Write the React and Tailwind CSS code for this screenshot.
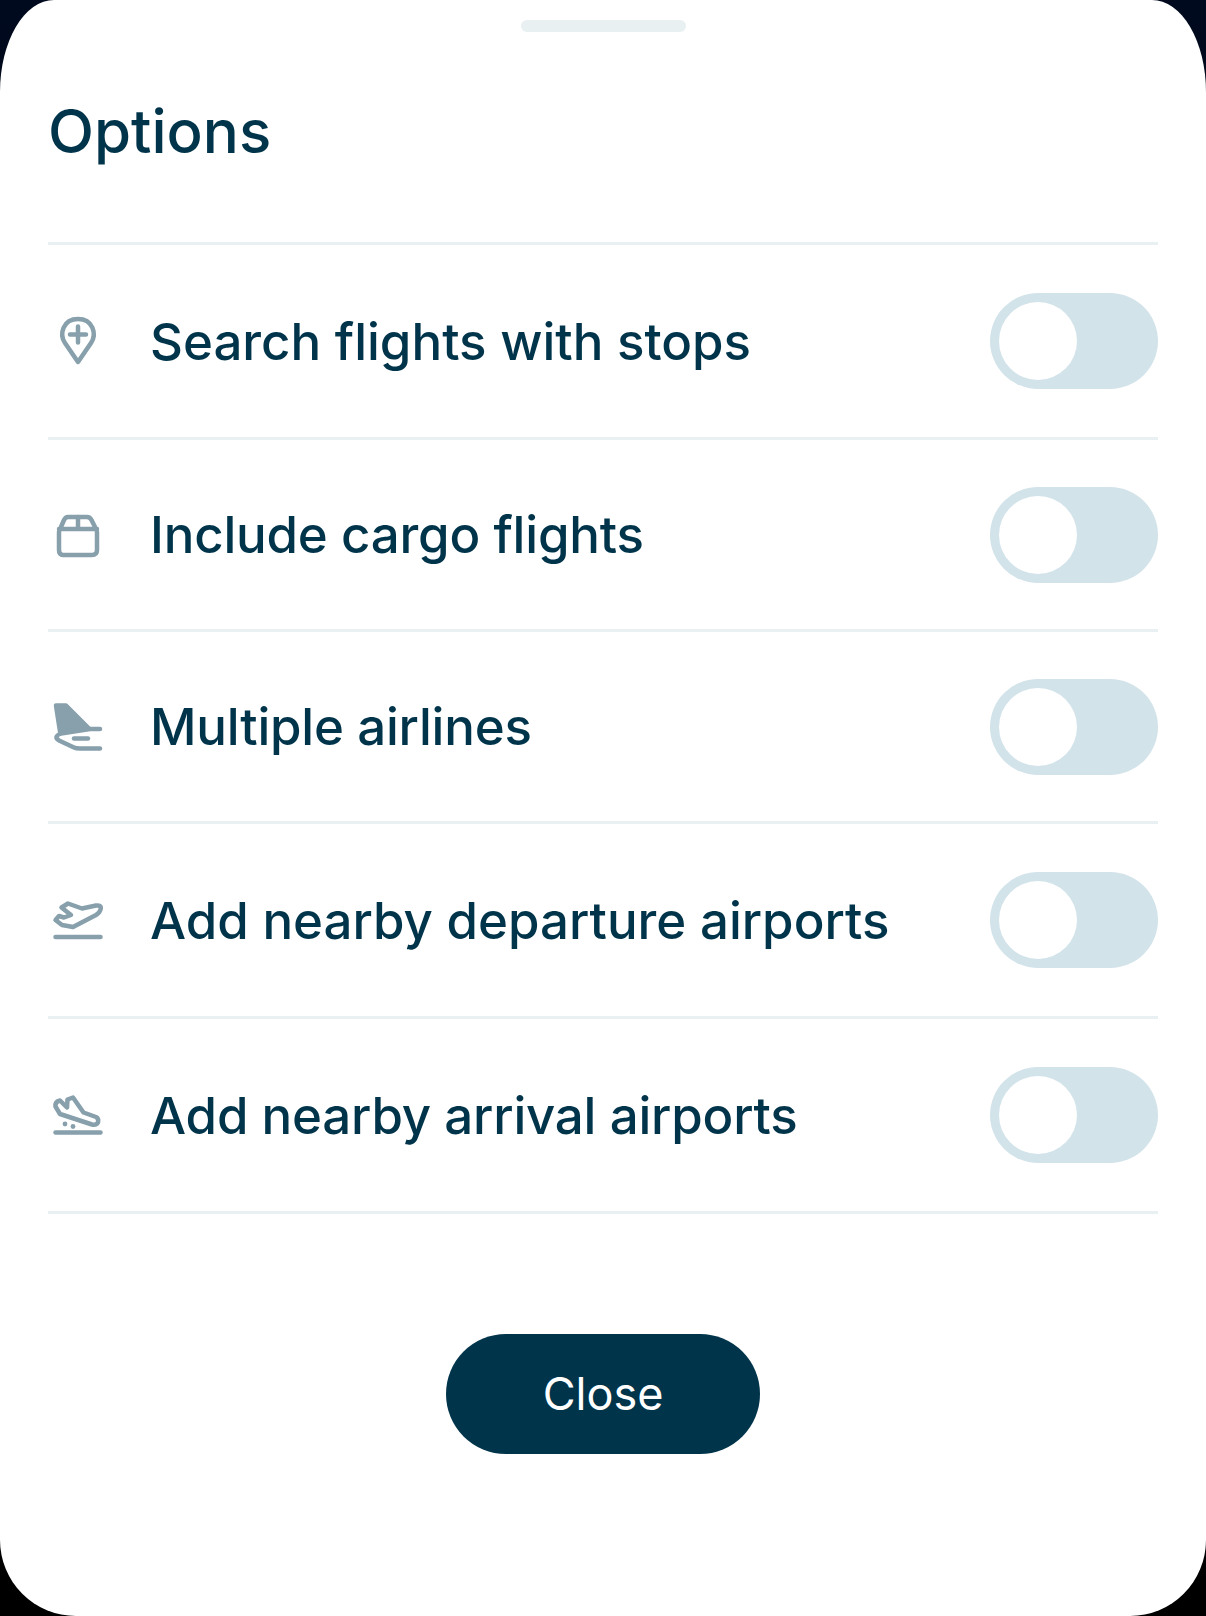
import React from "react";

const options = [
  { label: "Search flights with stops", height: "h-[195px]", text: "tracking-normal", icon: <PinIcon /> },
  { label: "Include cargo flights", height: "h-[192px]", text: "tracking-[-0.2px]", icon: <BoxIcon /> },
  { label: "Multiple airlines", height: "h-[192px]", text: "tracking-[-0.2px]", icon: <TailIcon /> },
  { label: "Add nearby departure airports", height: "h-[195px]", text: "tracking-normal", icon: <TakeoffIcon /> },
  { label: "Add nearby arrival airports", height: "h-[195px]", text: "tracking-[-0.2px]", icon: <LandingIcon /> },
];

function Svg({ y, children }) {
  return (
    <svg
      viewBox={`8 ${y} 56 56`}
      className="w-[56px] h-[56px] shrink-0 text-[#87a0ac]"
      fill="none"
      stroke="currentColor"
      strokeWidth="4.5"
      strokeLinecap="round"
      strokeLinejoin="round"
    >
      {children}
    </svg>
  );
}

function PinIcon() {
  return (
    <Svg y={13}>
      <path d="M38 62 L25 43 C19 34 23 19 38 19 C53 19 57 34 51 43 Z" />
      <path d="M38 26.5 V42.5 M30 34.5 H46" />
    </Svg>
  );
}

function BoxIcon() {
  return (
    <Svg y={11}>
      <path d="M28 21 H47 Q50 21 51.5 24 L55 31 Q57 33 57 36 V54 Q57 59 52 59 H23 Q19 59 19 54 V36 Q19 33 21 31 L24 24 Q25.5 21 28 21 Z" />
      <path d="M19 33 H57 M38 21 V33" />
    </Svg>
  );
}

function TailIcon() {
  return (
    <Svg y={8.5}>
      <path d="M16 15 H26 L49 38 L20 41 Z" fill="currentColor" />
      <path d="M60 38.5 H50 L21 43 Q13 46 19 50 L34 57 Q36 58 40 58 H60" />
      <path d="M34 48 H48" />
    </Svg>
  );
}

function TakeoffIcon() {
  return (
    <Svg y={7}>
      <path d="M15.5 35 L19 31 L24 32.5 L31 30 L21.5 22.5 L28 18.5 L42 23.5 L56 20.5 Q62 20 60.5 24.5 Q59.5 28 56 30 L33 42 L22 40 Z" />
      <path d="M15.5 52 H60.5" />
    </Svg>
  );
}

function LandingIcon() {
  return (
    <Svg y={6.5}>
      <path d="M15.5 26 Q15 21 20 20 L27 27 L27.5 19 L33 17 L43.5 32 L56 36.5 Q59 38 58 42 Q56 45 52 44 L20 33.5 Z" />
      <path d="M15.5 52 H60.5" />
      <circle cx="25" cy="43.5" r="2.4" fill="currentColor" stroke="none" />
      <circle cx="33" cy="46" r="2.4" fill="currentColor" stroke="none" />
    </Svg>
  );
}

function Toggle() {
  return (
    <div className="w-[168px] h-[96px] shrink-0 rounded-full bg-[#d2e3ea] p-[9px]">
      <div className="w-[78px] h-[78px] rounded-full bg-white" />
    </div>
  );
}

export default function App() {
  return (
    <div
      className="w-[1206px] h-[1616px] bg-gradient-to-b from-[#000a1e] to-black overflow-hidden"
      style={{ fontFamily: "Inter, sans-serif" }}
    >
      <div className="h-full bg-white rounded-tl-[54px_92px] rounded-tr-[54px_92px] rounded-bl-[76px] rounded-br-[76px] px-[48px] flex flex-col text-[#00344a]">
        <div className="mt-[20px] mx-auto w-[165px] h-[12px] rounded-md bg-[#e8f0f2]" />
        <h1 className="mt-[66px] mb-[78px] text-[60px] leading-[66px] font-medium">Options</h1>
        <div className="border-t-[3px] border-[#e8f0f2]">
          {options.map((o) => (
            <div key={o.label} className={`${o.height} flex items-center border-b-[3px] border-[#e8f0f2]`}>
              {o.icon}
              <span className={`ml-[46px] pt-[2px] flex-1 text-[51px] font-medium ${o.text}`}>{o.label}</span>
              <Toggle />
            </div>
          ))}
        </div>
        <button className="mt-[120px] mx-auto w-[314px] h-[120px] rounded-full bg-[#00344a] text-white text-[45px]">
          Close
        </button>
      </div>
    </div>
  );
}
